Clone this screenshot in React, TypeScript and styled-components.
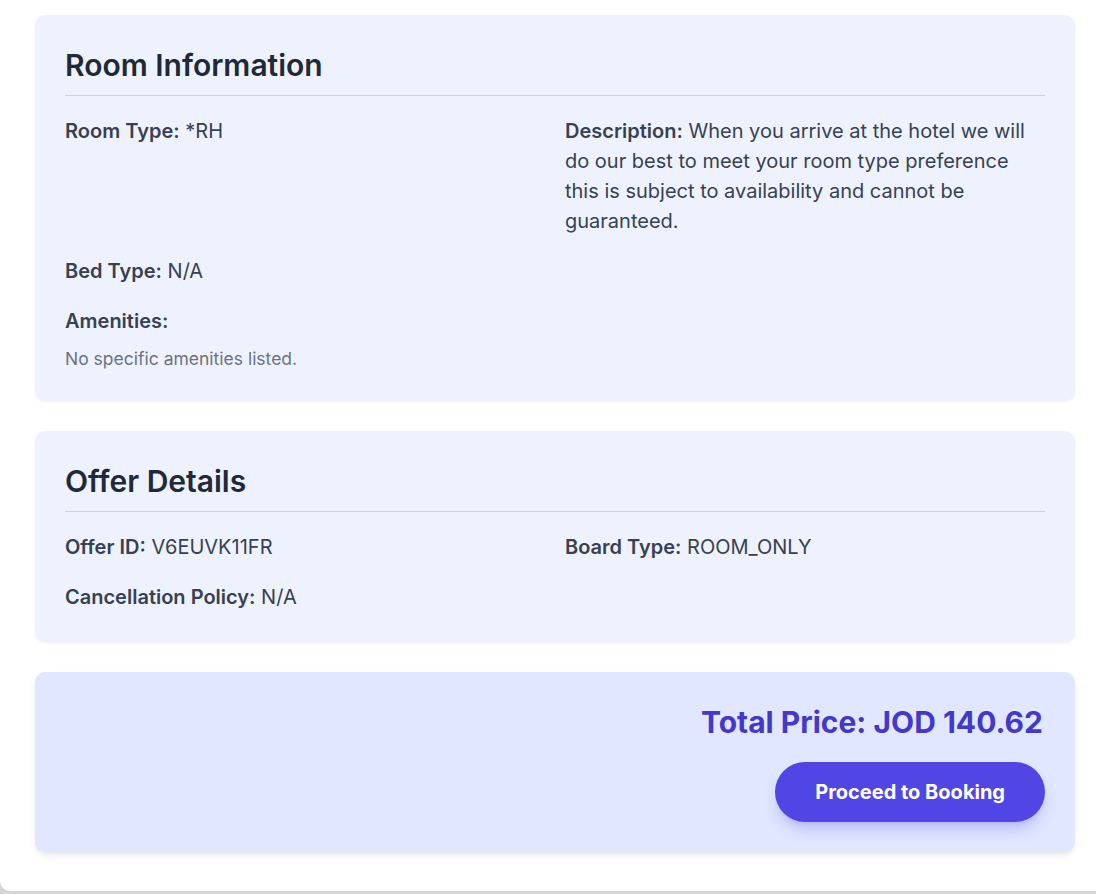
import styled, { createGlobalStyle } from 'styled-components';

const GlobalStyle = createGlobalStyle`
    html, body {
        margin: 0;
        padding: 0;
        background-color: #d4d6db;
        overflow: hidden;
    }
    body {
        font-family: Inter, "Noto Sans", "Liberation Sans", sans-serif;
        color: #374151;
    }
    * { box-sizing: border-box; }
`;

const Page = styled.div`
    width: 1110px;
    background-color: #ffffff;
    border-radius: 0 0 10px 10px;
    padding: 15px 35px 39px;
    display: flex;
    flex-direction: column;
    gap: 30px;
`;

const Card = styled.section<{ highlight?: boolean }>`
    background-color: ${(props) => (props.highlight ? '#e0e7ff' : '#eef2ff')};
    border-radius: 10px;
    padding: 30px;
    box-shadow: ${(props) =>
        props.highlight
            ? '0 4px 8px -2px rgba(0, 0, 0, 0.1), 0 2px 4px -2px rgba(0, 0, 0, 0.06)'
            : '0 1px 3px rgba(0, 0, 0, 0.06)'};
`;

const CardTitle = styled.h2`
    margin: 0 0 20px;
    padding: 2px 0 12px;
    border-bottom: 1px solid #c9d1f3;
    font-size: 30px;
    line-height: 36px;
    font-weight: 600;
    color: #1f2937;
`;

const InfoGrid = styled.div`
    display: grid;
    grid-template-columns: 1fr 1fr;
    column-gap: 20px;
    row-gap: 20px;
`;

const Field = styled.p<{ wide?: boolean }>`
    margin: 0;
    font-size: 20px;
    line-height: 30px;
    color: #374151;
    grid-column: ${(props) => (props.wide ? '1 / -1' : 'auto')};
`;

const Label = styled.strong`
    font-weight: 600;
`;

const Amenities = styled.div`
    grid-column: 1 / -1;
    display: flex;
    flex-direction: column;
    gap: 10px;
`;

const Muted = styled.p`
    margin: 0;
    font-size: 17.5px;
    line-height: 25px;
    color: #6b7280;
`;

const PriceBox = styled.div`
    display: flex;
    flex-direction: column;
    align-items: flex-end;
    gap: 20px;
`;

const TotalPrice = styled.h3`
    margin: 0;
    padding-right: 2px;
    font-size: 30px;
    line-height: 40px;
    font-weight: 700;
    color: #4338ca;
`;

const BookButton = styled.button`
    height: 60px;
    padding: 0 40px;
    border: none;
    border-radius: 9999px;
    background-color: #4f46e5;
    color: #ffffff;
    font-family: inherit;
    font-size: 20px;
    font-weight: 700;
    cursor: pointer;
    box-shadow: 0 10px 15px -3px rgba(79, 70, 229, 0.25), 0 4px 6px -4px rgba(79, 70, 229, 0.2);
`;

function App() {
    return (
        <>
            <GlobalStyle />
            <Page>
                <Card>
                    <CardTitle>Room Information</CardTitle>
                    <InfoGrid>
                        <Field><Label>Room Type:</Label> *RH</Field>
                        <Field>
                            <Label>Description:</Label> When you arrive at the hotel we will do our best to meet your room type preference this is subject to availability and cannot be guaranteed.
                        </Field>
                        <Field><Label>Bed Type:</Label> N/A</Field>
                        <Field />
                        <Amenities>
                            <Field><Label>Amenities:</Label></Field>
                            <Muted>No specific amenities listed.</Muted>
                        </Amenities>
                    </InfoGrid>
                </Card>
                <Card>
                    <CardTitle>Offer Details</CardTitle>
                    <InfoGrid>
                        <Field><Label>Offer ID:</Label> V6EUVK11FR</Field>
                        <Field><Label>Board Type:</Label> ROOM_ONLY</Field>
                        <Field wide><Label>Cancellation Policy:</Label> N/A</Field>
                    </InfoGrid>
                </Card>
                <Card highlight>
                    <PriceBox>
                        <TotalPrice>Total Price: JOD 140.62</TotalPrice>
                        <BookButton>Proceed to Booking</BookButton>
                    </PriceBox>
                </Card>
            </Page>
        </>
    );
}

export default App;
